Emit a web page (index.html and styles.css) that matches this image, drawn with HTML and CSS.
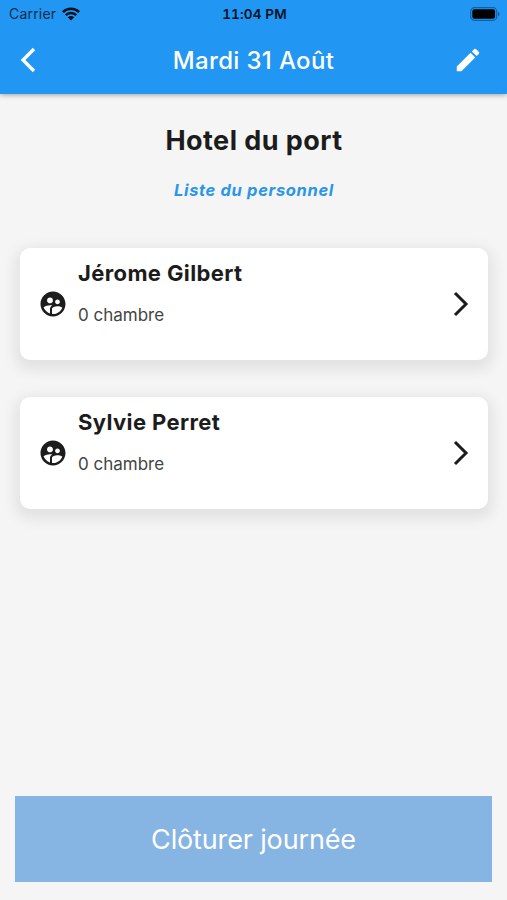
FILE: index.html
```html
<!DOCTYPE html>
<html lang="fr">
<head>
<meta charset="utf-8">
<meta name="viewport" content="width=device-width, initial-scale=1">
<title>Mardi 31 Août</title>
<link rel="stylesheet" href="styles.css">
</head>
<body>
<svg class="defs" aria-hidden="true">
  <symbol id="people" viewBox="0 0 24 24"><path d="M11.99 2c-5.52 0-10 4.48-10 10s4.48 10 10 10 10-4.48 10-10-4.48-10-10-10zm3.61 6.34c1.07 0 1.93.86 1.93 1.93 0 1.07-.86 1.93-1.93 1.93-1.07 0-1.93-.86-1.93-1.93-.01-1.07.86-1.93 1.93-1.93zm-6-1.58c1.3 0 2.36 1.06 2.36 2.36 0 1.3-1.06 2.36-2.36 2.36s-2.36-1.06-2.36-2.36c0-1.31 1.05-2.36 2.36-2.36zm0 9.13v3.75c-2.4-.75-4.3-2.6-5.14-4.96 1.05-1.12 3.67-1.69 5.14-1.69.53 0 1.2.08 1.9.22-1.64.87-1.9 2.02-1.9 2.68zM11.99 20c-.27 0-.53-.01-.79-.04v-4.07c0-1.42 2.94-2.13 4.4-2.13 1.07 0 2.92.39 3.84 1.15-1.17 2.97-4.06 5.09-7.45 5.09z"/></symbol>
  <symbol id="chevron" viewBox="0 0 16 26"><path d="M2 2l11 11L2 24" fill="none" stroke="currentColor" stroke-width="3"/></symbol>
</svg>
<header class="header">
  <div class="status">
    <div class="carrier"><span class="carrier-name">Carrier</span>
      <svg class="wifi" viewBox="0 0 18 14"><g fill="none" stroke="#06131f" stroke-width="2.5"><path d="M.9 5.1a11.5 11.5 0 0 1 16.2 0"/><path d="M3.7 8.1a7.5 7.5 0 0 1 10.6 0"/></g><path d="M9 13.6L5.7 10.3a4.7 4.7 0 0 1 6.6 0z" fill="#06131f"/></svg>
    </div>
    <div class="time">11:04 PM</div>
    <svg class="battery" viewBox="0 0 30 14"><rect x=".7" y=".7" width="26" height="12.6" rx="3.8" fill="none" stroke="#155f9c" stroke-width="1.2"/><rect x="2.3" y="2.3" width="22.8" height="9.4" rx="2.2"/><path d="M28 4.8q1.7.8 1.7 2.2T28 9.2z" fill="#155f9c"/></svg>
  </div>
  <div class="bar">
    <svg class="back" viewBox="0 0 16 26"><path d="M14 2L3 13l11 11" fill="none" stroke="#fff" stroke-width="3.3"/></svg>
    <h1 class="title">Mardi 31 Août</h1>
    <svg class="edit" viewBox="0 0 24 24"><path fill="#fff" d="M3 17.25V21h3.75L17.81 9.94l-3.75-3.75L3 17.25zM20.71 7.04c.39-.39.39-1.02 0-1.41l-2.34-2.34a.996.996 0 0 0-1.41 0l-1.83 1.83 3.75 3.75 1.83-1.83z"/></svg>
  </div>
</header>
<main class="content">
  <h2 class="hotel">Hotel du port</h2>
  <p class="subtitle">Liste du personnel</p>
  <section class="list">
    <article class="card">
      <svg class="people"><use href="#people"/></svg>
      <div class="info"><h3 class="name">Jérome Gilbert</h3><p class="rooms">0 chambre</p></div>
      <svg class="chevron"><use href="#chevron"/></svg>
    </article>
    <article class="card">
      <svg class="people"><use href="#people"/></svg>
      <div class="info"><h3 class="name">Sylvie Perret</h3><p class="rooms">0 chambre</p></div>
      <svg class="chevron"><use href="#chevron"/></svg>
    </article>
  </section>
</main>
<button class="close-day">Clôturer journée</button>
</body>
</html>
```
FILE: styles.css
```css
* { box-sizing: border-box; margin: 0; padding: 0; }
body {
  height: 900px;
  display: flex;
  flex-direction: column;
  background: #f5f5f5;
  color: #1c1c1c;
  font-family: Inter, "Liberation Sans", sans-serif;
  overflow: hidden;
}
svg { display: block; flex: none; }
.defs { display: none; }
.header {
  height: 94px;
  background: #2196f3;
  box-shadow: 0 1px 5px rgba(0, 0, 0, .35);
}
.status {
  height: 27px;
  padding: 0 7px 0 9px;
  display: grid;
  grid-template-columns: 1fr auto 1fr;
  align-items: center;
  color: #06131f;
  font-size: 14px;
}
.carrier { display: flex; align-items: center; gap: 6px; }
.carrier-name { color: #0a2d4a; letter-spacing: .2px; }
.wifi { width: 18px; height: 14px; }
.time { font-weight: 600; font-size: 13.5px; letter-spacing: .15px; font-variant-numeric: tabular-nums; }
.battery { width: 30px; height: 14px; justify-self: end; }
.bar {
  height: 66px;
  padding: 0 20px;
  display: grid;
  grid-template-columns: 1fr auto 1fr;
  align-items: center;
}
.back { width: 16px; height: 26px; }
.title { color: #fff; font-size: 24px; font-weight: 500; letter-spacing: .35px; }
.edit { width: 30px; height: 30px; margin-right: 4px; justify-self: end; }
.content { flex: 1; padding: 0 19px 0 20px; }
.hotel { margin-top: 29px; text-align: center; font-size: 27px; line-height: 36px; font-weight: 650; letter-spacing: .45px; }
.subtitle { margin-top: 19px; text-align: center; color: #2b95ec; font-size: 16.5px; line-height: 24px; font-style: italic; font-weight: 700; letter-spacing: .65px; }
.list { margin-top: 46px; display: grid; gap: 37px; }
.card {
  height: 112px;
  padding: 0 19.5px 0 18px;
  display: flex;
  align-items: center;
  background: #fff;
  border-radius: 10px;
  box-shadow: 0 5px 14px 5px rgba(0, 0, 0, .08);
}
.people { width: 30px; height: 30px; fill: #1c1c1c; }
.info { flex: 1; align-self: flex-start; padding: 10px 0 0 10px; }
.name { font-size: 22px; line-height: 30px; font-weight: 650; letter-spacing: .38px; }
.rooms { margin-top: 16px; font-size: 17px; line-height: 22px; color: #444; }
.chevron { width: 16px; height: 26px; }
.close-day {
  height: 86px;
  margin: 0 15px 18px;
  border: 0;
  background: #86b4e3;
  color: #fff;
  font: 400 27px Inter, "Liberation Sans", sans-serif;
  letter-spacing: -.15px;
}
```
